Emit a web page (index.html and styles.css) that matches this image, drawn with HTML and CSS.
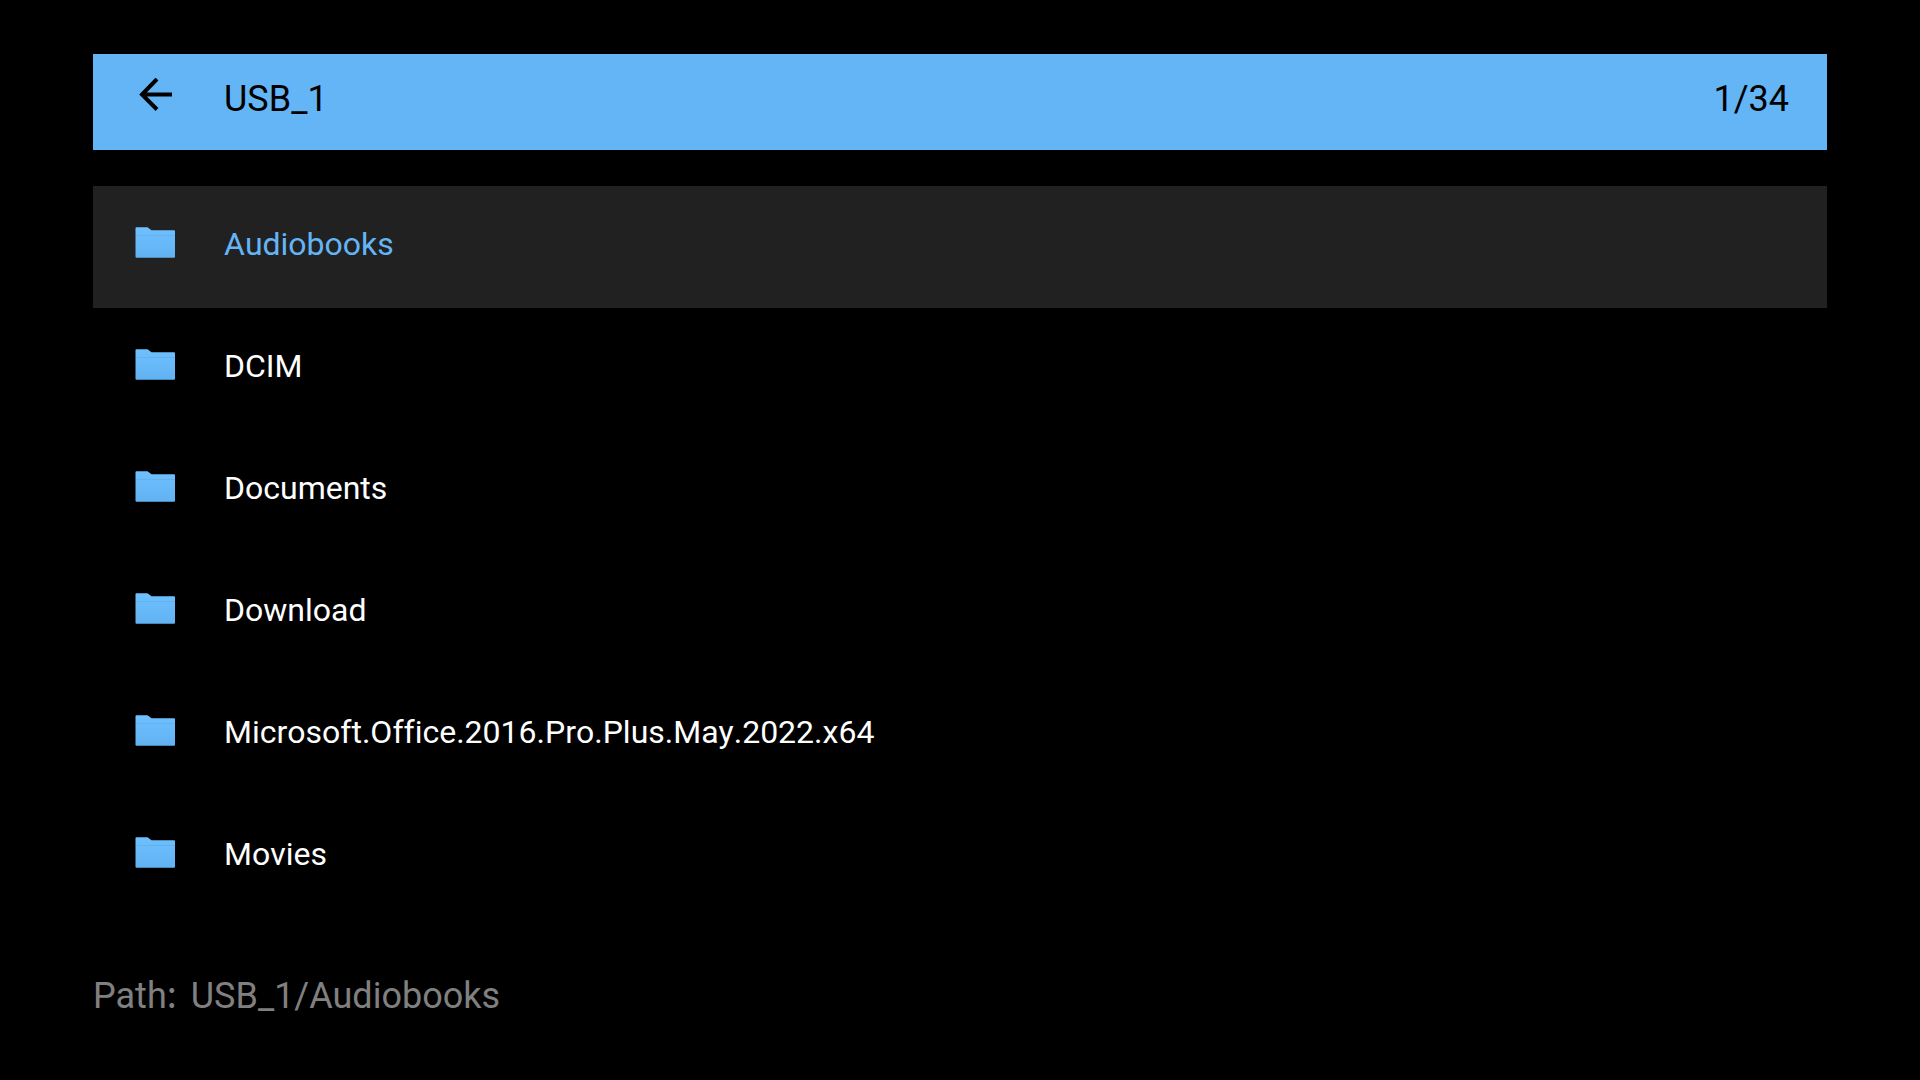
FILE: index.html
```html
<!DOCTYPE html>
<html lang="en">
<head>
<meta charset="utf-8">
<title>USB_1</title>
<link rel="stylesheet" href="styles.css">
</head>
<body>
<svg class="defs" aria-hidden="true">
  <defs>
    <linearGradient id="fill" x1="0" y1="0" x2="0" y2="1">
      <stop offset="0" stop-color="#6ec0ff"/>
      <stop offset="1" stop-color="#60b2f2"/>
    </linearGradient>
    <symbol id="folder" viewBox="0 0 40 32">
      <path fill="url(#fill)" d="M1.500 .3h11l4 3h22.500q1 0 1 1v25.500q0 1-1 1H1.500q-1 0-1-1V1.300q0-1 1-1z"/>
      <path fill="#62b2f2" d="M1 8h39v1H1z"/>
    </symbol>
  </defs>
</svg>
<main class="browser">
  <header class="bar">
    <button class="back" aria-label="Back">
      <svg class="arrow" viewBox="0 0 34 34"><path d="M19 1 4 16.500l15 15M4 16.500h30"/></svg>
    </button>
    <h1 class="title">USB_1</h1>
    <span class="count">1/34</span>
  </header>
  <nav class="list">
    <a class="row selected" href="#"><svg class="folder"><use href="#folder"/></svg><span class="name">Audiobooks</span></a>
    <a class="row" href="#"><svg class="folder"><use href="#folder"/></svg><span class="name">DCIM</span></a>
    <a class="row" href="#"><svg class="folder"><use href="#folder"/></svg><span class="name">Documents</span></a>
    <a class="row" href="#"><svg class="folder"><use href="#folder"/></svg><span class="name">Download</span></a>
    <a class="row" href="#"><svg class="folder"><use href="#folder"/></svg><span class="name">Microsoft.Office.2016.Pro.Plus.May.2022.x64</span></a>
    <a class="row" href="#"><svg class="folder"><use href="#folder"/></svg><span class="name">Movies</span></a>
  </nav>
  <footer class="path"><span>Path<span class="colon">:</span></span><span>USB_1/Audiobooks</span></footer>
</main>
</body>
</html>
```
FILE: styles.css
```css
* { box-sizing: border-box; }
body { margin: 0; background: #000; color: #fff; font-family: Roboto, sans-serif; }
.defs { display: block; width: 0; height: 0; }
.browser { padding: 54px 93px; }
.bar { display: flex; align-items: flex-start; min-height: 96px; padding: 24px 38px 0 42px; background: #64b5f6; color: #000; }
.back { display: flex; justify-content: center; width: 40px; padding: 0; border: 0; background: none; color: inherit; }
.arrow { width: 34px; height: 34px; fill: none; stroke: currentColor; stroke-width: 4; }
.title { flex: 1; margin: 0 0 0 49px; font-size: 36px; line-height: 42px; font-weight: 400; }
.count { font-size: 36px; line-height: 42px; }
.list { margin-top: 36px; }
.row { display: flex; align-items: center; gap: 49px; min-height: 122px; padding: 0 42px 8px; color: #fff; font-size: 32px; line-height: 40px; text-decoration: none; font-kerning: none; font-variant-ligatures: none; }
.name { padding-top: 2px; }
.selected { background: #212121; color: #64b5f6; }
.folder { width: 40px; height: 32px; }
.path { display: flex; align-items: baseline; gap: 14px; margin-top: 56px; color: #808080; font-size: 36px; line-height: 42px; }
.colon { font-family: "Noto Sans CJK SC", sans-serif; line-height: 1; }
```
